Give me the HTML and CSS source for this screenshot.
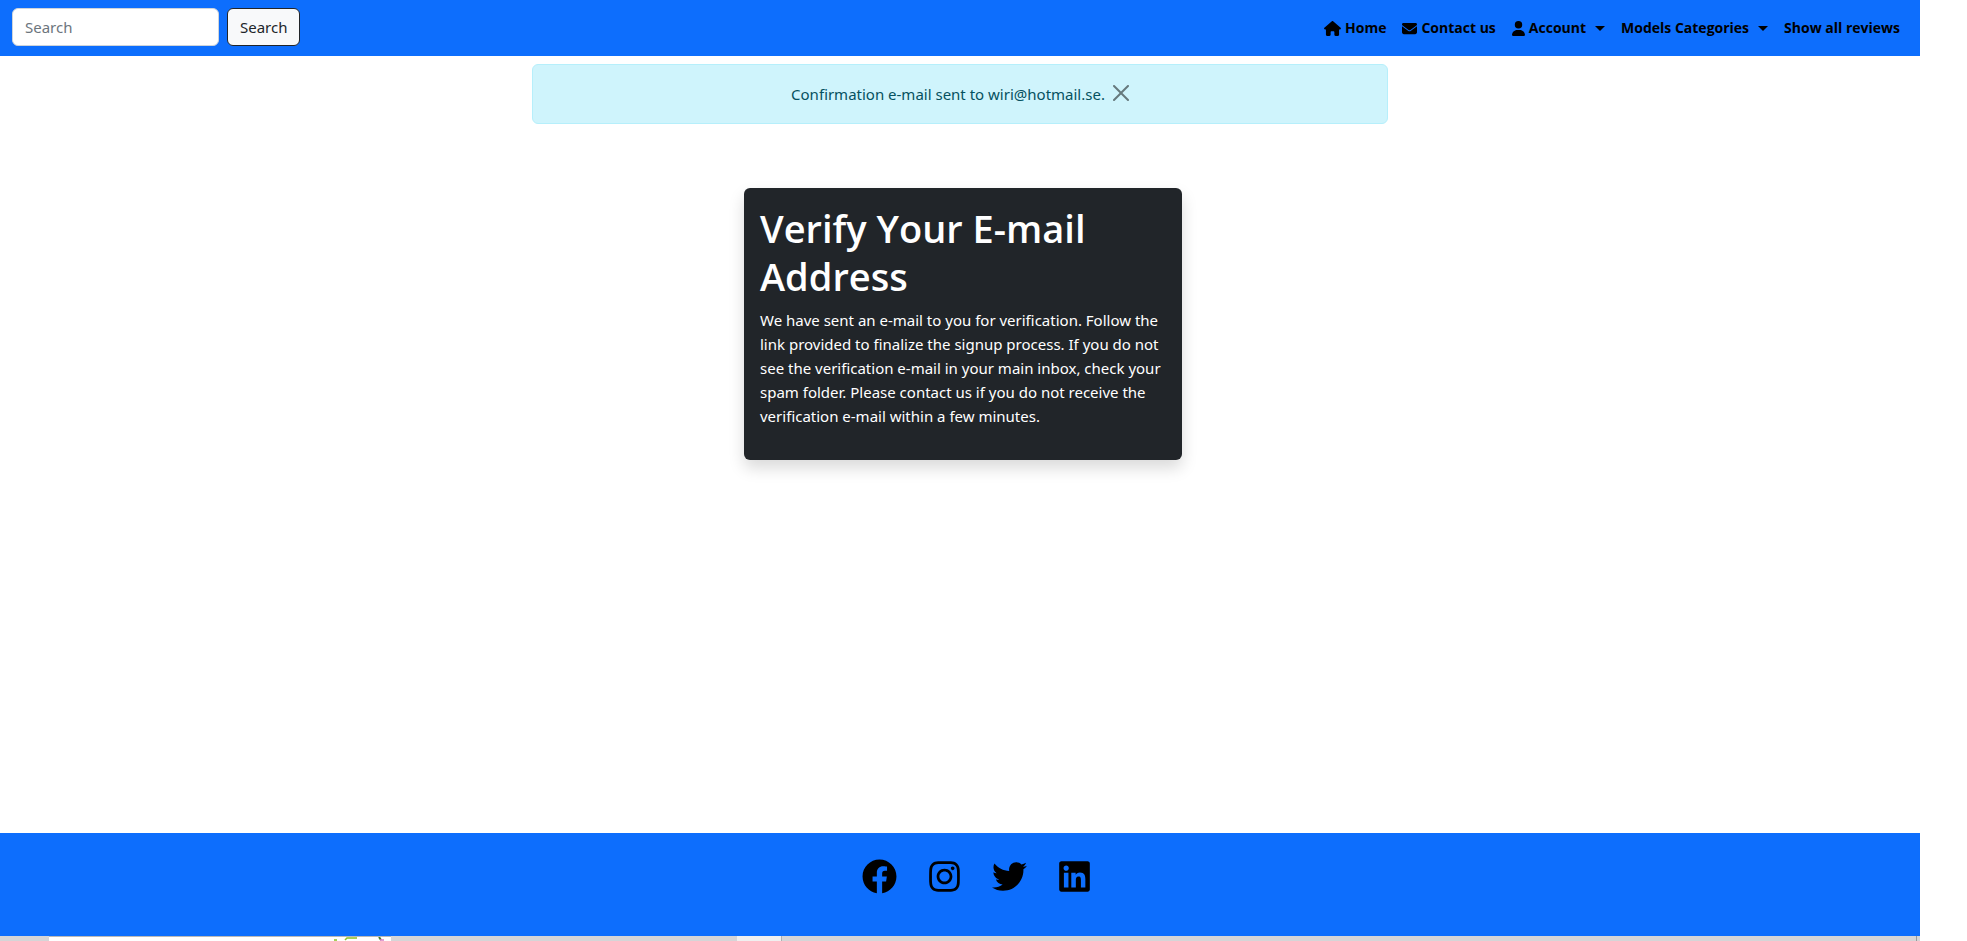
FILE: index.html
```html
<!DOCTYPE html>
<html lang="en">
<head>
<meta charset="utf-8">
<title>Verify Your E-mail Address</title>
<link rel="stylesheet" href="styles.css">
</head>
<body>
<header class="navbar">
  <form class="search" role="search">
    <input class="search-input" type="search" placeholder="Search" aria-label="Search">
    <button class="search-button" type="button">Search</button>
  </form>
  <nav class="nav" aria-label="Main">
    <a class="nav-link" href="#"><svg class="nav-icon nav-icon-wide" viewBox="0 0 576 512" aria-hidden="true"><path d="M575.8 255.5c0 18-15 32.1-32 32.1h-32l.7 160.2c0 2.7-.2 5.4-.5 8.1V472c0 22.1-17.9 40-40 40H456c-1.1 0-2.2 0-3.3-.1c-1.4 .1-2.8 .1-4.2 .1H416 392c-22.1 0-40-17.9-40-40V448 384c0-17.7-14.3-32-32-32H256c-17.7 0-32 14.3-32 32v64 24c0 22.1-17.9 40-40 40H160 128.1c-1.5 0-3-.1-4.5-.2c-1.2 .1-2.4 .2-3.6 .2H104c-22.1 0-40-17.9-40-40V360c0-.9 0-1.9 .1-2.8V287.6H32c-18 0-32-14-32-32.1c0-9 3-17 10-24L266.4 8c7-7 15-8 22-8s15 2 21 7L564.8 231.5c8 7 12 15 11 24z"/></svg>Home</a>
    <a class="nav-link" href="#"><svg class="nav-icon" viewBox="0 0 512 512" aria-hidden="true"><path d="M48 64C21.5 64 0 85.5 0 112c0 15.1 7.1 29.3 19.2 38.4L236.8 313.6c11.4 8.5 27 8.5 38.4 0L492.8 150.4c12.1-9.1 19.2-23.3 19.2-38.4c0-26.5-21.5-48-48-48H48zM0 176V384c0 35.3 28.7 64 64 64H448c35.3 0 64-28.7 64-64V176L294.4 339.2c-22.8 17.1-54 17.1-76.8 0L0 176z"/></svg>Contact us</a>
    <a class="nav-link dropdown" href="#"><svg class="nav-icon nav-icon-narrow" viewBox="0 0 448 512" aria-hidden="true"><path d="M224 256A128 128 0 1 0 224 0a128 128 0 1 0 0 256zm-45.7 48C79.8 304 0 383.8 0 482.3C0 498.7 13.3 512 29.7 512H418.3c16.4 0 29.7-13.3 29.7-29.7C448 383.8 368.2 304 269.7 304H178.3z"/></svg>Account</a>
    <a class="nav-link dropdown" href="#">Models Categories</a>
    <a class="nav-link" href="#">Show all reviews</a>
  </nav>
</header>
<main class="main">
  <div class="alert" role="alert">
    <span>Confirmation e-mail sent to wiri@hotmail.se.</span>
    <button class="alert-close" type="button" aria-label="Close"><svg viewBox="0 0 16 16" aria-hidden="true"><path d="M.293.293a1 1 0 011.414 0L8 6.586 14.293.293a1 1 0 111.414 1.414L9.414 8l6.293 6.293a1 1 0 01-1.414 1.414L8 9.414l-6.293 6.293a1 1 0 01-1.414-1.414L6.586 8 .293 1.707a1 1 0 010-1.414z"/></svg></button>
  </div>
  <div class="content">
    <section class="card">
      <h1 class="card-title">Verify Your E-mail Address</h1>
      <p class="card-text">We have sent an e-mail to you for verification. Follow the link provided to finalize the signup process. If you do not see the verification e-mail in your main inbox, check your spam folder. Please contact us if you do not receive the verification e-mail within a few minutes.</p>
    </section>
  </div>
</main>
<footer class="footer">
  <ul class="social">
    <li><a href="#" aria-label="Facebook"><svg class="social-icon" viewBox="0 0 512 512"><path d="M504 256C504 119 393 8 256 8S8 119 8 256c0 123.78 90.69 226.38 209.25 245V327.69h-63V256h63v-54.64c0-62.15 37-96.48 93.67-96.48 27.14 0 55.52 4.84 55.52 4.84v61h-31.28c-30.8 0-40.41 19.12-40.41 38.73V256h68.78l-11 71.69h-57.78V501C413.31 482.38 504 379.78 504 256z"/></svg></a></li>
    <li><a href="#" aria-label="Instagram"><svg class="social-icon social-icon-narrow" viewBox="0 0 448 512"><path d="M224.1 141c-63.6 0-114.9 51.3-114.9 114.9s51.3 114.9 114.9 114.9S339 319.5 339 255.9 287.7 141 224.1 141zm0 189.6c-41.1 0-74.7-33.5-74.7-74.7s33.5-74.7 74.7-74.7 74.7 33.5 74.7 74.7-33.6 74.7-74.7 74.7zm146.4-194.3c0 14.9-12 26.8-26.8 26.8-14.9 0-26.8-12-26.8-26.8s12-26.8 26.8-26.8 26.8 12 26.8 26.8zm76.1 27.2c-1.7-35.9-9.9-67.7-36.2-93.9-26.2-26.2-58-34.4-93.9-36.2-37-2.1-147.9-2.1-184.9 0-35.8 1.7-67.6 9.9-93.9 36.1s-34.4 58-36.2 93.9c-2.1 37-2.1 147.9 0 184.9 1.7 35.9 9.9 67.7 36.2 93.9s58 34.4 93.9 36.2c37 2.1 147.9 2.1 184.9 0 35.9-1.7 67.7-9.9 93.9-36.2 26.2-26.2 34.4-58 36.2-93.9 2.1-37 2.1-147.8 0-184.8zM398.8 388c-7.8 19.6-22.9 34.7-42.6 42.6-29.5 11.7-99.5 9-132.1 9s-102.7 2.6-132.1-9c-19.6-7.8-34.7-22.9-42.6-42.6-11.7-29.5-9-99.5-9-132.1s-2.6-102.7 9-132.1c7.8-19.6 22.9-34.7 42.6-42.6 29.5-11.7 99.5-9 132.1-9s102.7-2.6 132.1 9c19.6 7.8 34.7 22.9 42.6 42.6 11.7 29.5 9 99.5 9 132.1s2.7 102.7-9 132.1z"/></svg></a></li>
    <li><a href="#" aria-label="Twitter"><svg class="social-icon" viewBox="0 0 512 512"><path d="M459.37 151.716c.325 4.548.325 9.097.325 13.645 0 138.72-105.583 298.558-298.558 298.558-59.452 0-114.68-17.219-161.137-47.106 8.447.974 16.568 1.299 25.34 1.299 49.055 0 94.213-16.568 130.274-44.832-46.132-.975-84.792-31.188-98.112-72.772 6.498.974 12.995 1.624 19.818 1.624 9.421 0 18.843-1.3 27.614-3.573-48.081-9.747-84.143-51.98-84.143-102.985v-1.299c13.969 7.797 30.214 12.67 47.431 13.319-28.264-18.843-46.781-51.005-46.781-87.391 0-19.492 5.197-37.36 14.294-52.954 51.655 63.675 129.3 105.258 216.365 109.807-1.624-7.797-2.599-15.918-2.599-24.04 0-57.828 46.782-104.934 104.934-104.934 30.213 0 57.502 12.67 76.67 33.137 23.715-4.548 46.456-13.32 66.599-25.34-7.798 24.366-24.366 44.833-46.132 57.827 21.117-2.273 41.584-8.122 60.426-16.243-14.292 20.791-32.161 39.308-52.628 54.253z"/></svg></a></li>
    <li><a href="#" aria-label="LinkedIn"><svg class="social-icon social-icon-narrow" viewBox="0 0 448 512"><path d="M416 32H31.9C14.3 32 0 46.5 0 64.3v383.4C0 465.5 14.3 480 31.9 480H416c17.6 0 32-14.5 32-32.3V64.3c0-17.8-14.4-32.3-32-32.3zM135.4 416H69V202.2h66.5V416zm-33.2-243c-21.3 0-38.5-17.3-38.5-38.5S80.9 96 102.2 96c21.2 0 38.5 17.3 38.5 38.5 0 21.3-17.2 38.5-38.5 38.5zm282.1 243h-66.4V312c0-24.8-.5-56.7-34.5-56.7-34.6 0-39.9 27-39.9 54.9V416h-66.4V202.2h63.7v29.2h.9c8.9-16.8 30.6-34.5 62.2-34.5 66.5 0 78.9 43.7 78.9 101.5V416z"/></svg></a></li>
  </ul>
</footer>
<div class="edge" aria-hidden="true">
  <div class="edge-window"><svg class="edge-mark" viewBox="0 0 50 4"><path d="M0 3h3M11 3l2-2h10" stroke="#8cbf26" stroke-width="1.5" fill="none"/><path d="M45 0l2 3" stroke="#4c7a2a" stroke-width="2"/><path d="M46 3h4" stroke="#d77fc4" stroke-width="1.5"/></svg></div>
  <div class="edge-tab"></div>
  <div class="edge-line"></div>
</div>
</body>
</html>
```
FILE: styles.css
```css
*, *::before, *::after { box-sizing: border-box; }

body {
  margin: 0;
  padding-right: 47px;
  min-height: 100vh;
  display: flex;
  flex-direction: column;
  background: #fff;
  color: #212529;
  font: 400 15px/24px "Segoe UI", "Noto Sans", "Open Sans", sans-serif;
}

.navbar {
  display: flex;
  justify-content: space-between;
  align-items: flex-start;
  padding: 8px 12px;
  min-height: 56px;
  background: #0d6efd;
}

.search { display: flex; gap: 8px; }

.search-input,
.search-button {
  height: 38px;
  padding: 6px 12px;
  border: 1px solid #ced4da;
  border-radius: 6px;
  font: inherit;
}

.search-input { width: 207px; background: #fff; color: #212529; }
.search-input::placeholder { color: #6c757d; opacity: 1; }
.search-button { background: #f8f9fa; border-color: #212529; color: #212529; }

.nav { display: flex; }

.nav-link {
  display: flex;
  align-items: center;
  gap: 4px;
  padding: 8px;
  color: #000;
  font-family: "Segoe UI", "Open Sans", sans-serif;
  font-size: 14px;
  font-weight: 700;
  line-height: 24px;
  text-decoration: none;
}

.nav-icon { width: 15px; height: 15px; }
.nav-icon-wide { width: 17px; }
.nav-icon-narrow { width: 13px; }

.dropdown::after {
  content: "";
  margin-left: 5px;
  border-top: 5px solid #000;
  border-left: 5px solid transparent;
  border-right: 5px solid transparent;
}

.main {
  flex: 1;
  display: flex;
  flex-direction: column;
  align-items: center;
  padding: 8px 12px;
}

.alert {
  display: flex;
  justify-content: center;
  gap: 8px;
  width: 100%;
  max-width: 856px;
  min-height: 60px;
  padding: 17px 16px;
  border: 1px solid #b6effb;
  border-radius: 6px;
  background: #cff4fc;
  color: #055160;
}

.alert-close {
  display: flex;
  align-self: flex-start;
  margin-top: 3px;
  padding: 0;
  border: 0;
  background: none;
  opacity: 0.5;
}

.alert-close svg { width: 16px; height: 16px; fill: #000; }

.content {
  display: flex;
  justify-content: center;
  width: 100%;
  padding: 64px 0 0 6px;
}

.card {
  width: 100%;
  max-width: 438px;
  padding: 16px;
  border-radius: 6px;
  background: #212529;
  color: #fff;
  box-shadow: 0 8px 16px rgba(0, 0, 0, 0.15);
}

.card-title {
  margin: 0 0 8px;
  font-family: "Segoe UI", "Open Sans", sans-serif;
  font-size: 38px;
  font-weight: 600;
  line-height: 48px;
}

.card-text { margin: 0 0 16px; }

.footer { min-height: 103px; padding: 26px 0; background: #0d6efd; }

.social {
  display: flex;
  justify-content: center;
  gap: 32px;
  margin: 0;
  padding: 0 0 0 32px;
  list-style: none;
}

.social-icon { display: block; width: 35px; height: 35px; }
.social-icon-narrow { width: 31px; }

.edge {
  display: grid;
  grid-template-columns: 49px 342px 346px 45px 1fr 4px;
  height: 5px;
  background: #d5d5d7;
}

.edge-window {
  grid-column: 2;
  display: flex;
  justify-content: flex-end;
  align-items: flex-end;
  border-top: 1px solid #b9b9b9;
  padding-right: 7px;
  background: #fff;
}

.edge-mark { width: 50px; height: 4px; }
.edge-tab { grid-column: 4; background: #f0f0f0; border-right: 1px solid #b0b0b0; }
.edge-line { grid-column: 6; border-left: 1px solid #999; }
```
